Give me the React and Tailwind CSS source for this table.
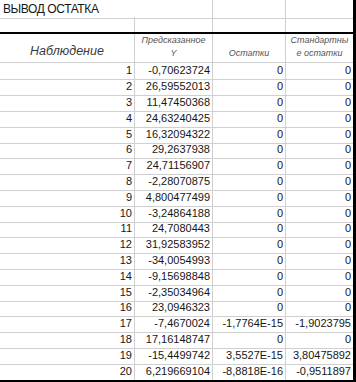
import React from "react";

// rows of the residual output table
const rows = [
  ["1", "-0,70623724", "0", "0"],
  ["2", "26,59552013", "0", "0"],
  ["3", "11,47450368", "0", "0"],
  ["4", "24,63240425", "0", "0"],
  ["5", "16,32094322", "0", "0"],
  ["6", "29,2637938", "0", "0"],
  ["7", "24,71156907", "0", "0"],
  ["8", "-2,28070875", "0", "0"],
  ["9", "4,800477499", "0", "0"],
  ["10", "-3,24864188", "0", "0"],
  ["11", "24,7080443", "0", "0"],
  ["12", "31,92583952", "0", "0"],
  ["13", "-34,0054993", "0", "0"],
  ["14", "-9,15698848", "0", "0"],
  ["15", "-2,35034964", "0", "0"],
  ["16", "23,0946323", "0", "0"],
  ["17", "-7,4670024", "-1,7764E-15", "-1,9023795"],
  ["18", "17,16148747", "0", "0"],
  ["19", "-15,4499742", "3,5527E-15", "3,80475892"],
  ["20", "6,219669104", "-8,8818E-16", "-0,9511897"],
];

const cols = "grid grid-cols-[135px_78px_73px_67px]";
const cell = "border-r border-b border-[#d0d0d0]";

export default function App() {
  return (
    <div
      className="w-[356px] h-[382px] bg-white flex flex-col overflow-hidden border-r-[3px] border-b-2 border-black text-[#161616]"
      style={{ fontFamily: '"Liberation Sans", Arial, sans-serif' }}
    >
      {/* title row */}
      <div className={`${cols} h-[17px]`}>
        <div className={`${cell} border-r-0 flex items-center pl-[3px] text-[12px] tracking-[-0.4px] whitespace-nowrap`}>
          ВЫВОД ОСТАТКА
        </div>
        <div className={cell}></div>
        <div className={cell}></div>
        <div className="border-b border-[#d0d0d0]"></div>
      </div>

      {/* empty row with the thick line under it */}
      <div className={`${cols} h-[17px] border-b-2 border-black`}>
        <div className="border-r border-[#d0d0d0]"></div>
        <div className="border-r border-[#d0d0d0]"></div>
        <div className="border-r border-[#d0d0d0]"></div>
        <div></div>
      </div>

      {/* header */}
      <div className={`${cols} h-[28px] italic`}>
        <div className={`${cell} flex items-end justify-center pb-[1px] text-[12.5px] text-[#3a3a3a]`}>
          Наблюдение
        </div>
        <div className={`${cell} flex flex-col items-center justify-end pb-[2px] text-[9px] leading-[13px] text-[#555]`}>
          <span>Предсказанное</span>
          <span>Y</span>
        </div>
        <div className={`${cell} flex items-end justify-center pb-[2px] text-[9px] leading-[13px] text-[#555]`}>
          Остатки
        </div>
        <div className={`${cell} border-r-0 flex flex-col items-center justify-end pb-[2px] text-[9px] leading-[13px] text-[#555]`}>
          <span>Стандартны</span>
          <span>е остатки</span>
        </div>
      </div>

      {/* data */}
      {rows.map((r, i) => (
        <div key={r[0]} className={`${cols} ${i % 5 === 4 ? "h-[15px]" : "h-[16px]"} text-[11px]`}>
          {r.map((v, j) => (
            <div
              key={j}
              className={`${cell} ${j === 3 ? "border-r-0" : ""} flex items-center justify-end pr-[2px] whitespace-nowrap`}
            >
              {v}
            </div>
          ))}
        </div>
      ))}

      {/* partial row under the last one */}
      <div className={`${cols} flex-1`}>
        <div className="border-r border-[#d0d0d0]"></div>
        <div className="border-r border-[#d0d0d0]"></div>
        <div className="border-r border-[#d0d0d0]"></div>
        <div></div>
      </div>
    </div>
  );
}
